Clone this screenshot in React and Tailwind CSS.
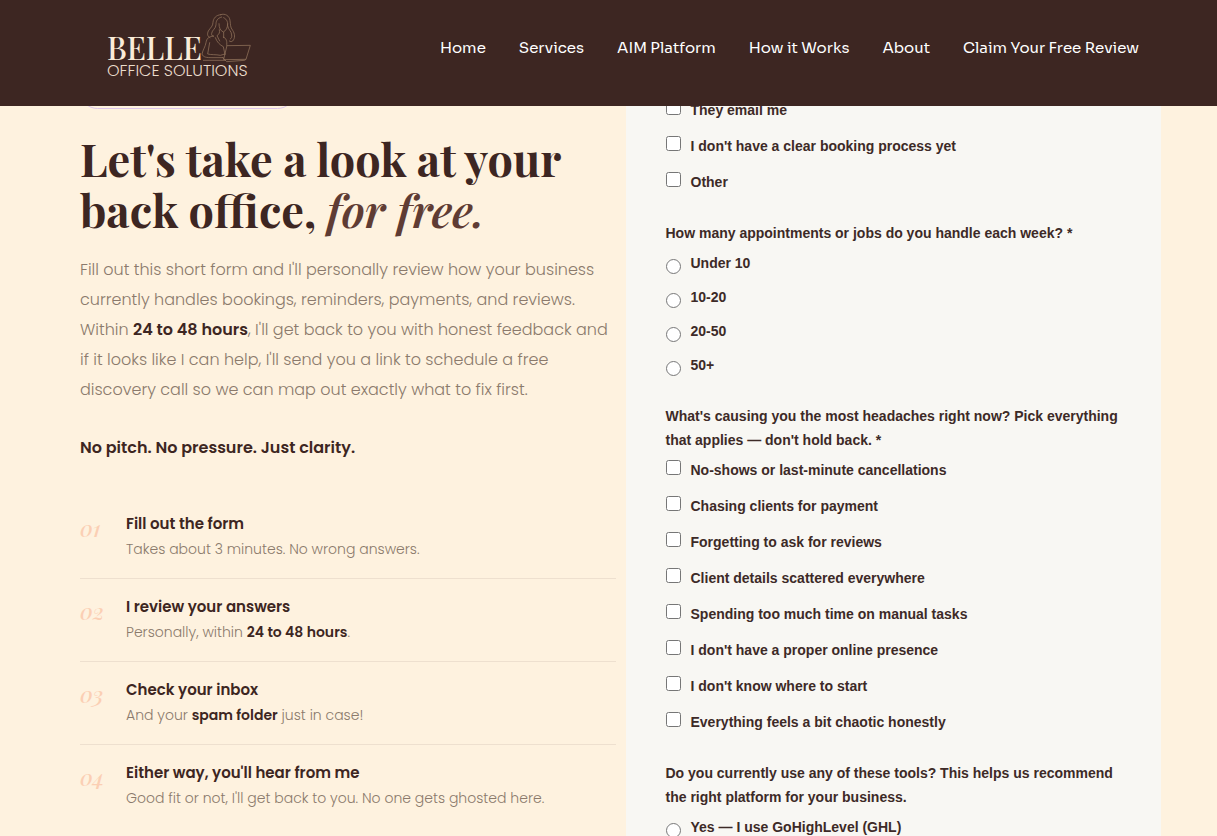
const navLinks = [
    "Home",
    "Services",
    "AIM Platform",
    "How it Works",
    "About",
    "Claim Your Free Review",
];

const steps = [
    { num: "01", title: "Fill out the form", text: "Takes about 3 minutes. No wrong answers." },
    {
        num: "02",
        title: "I review your answers",
        text: <>Personally, within <Strong>24 to 48 hours</Strong>.</>,
    },
    {
        num: "03",
        title: "Check your inbox",
        text: <>And your <Strong>spam folder</Strong> just in case!</>,
    },
    {
        num: "04",
        title: "Either way, you'll hear from me",
        text: "Good fit or not, I'll get back to you. No one gets ghosted here.",
    },
];

const questions = [
    {
        id: "booking",
        type: "checkbox",
        options: ["They email me", "I don't have a clear booking process yet", "Other"],
    },
    {
        id: "volume",
        type: "radio",
        label: "How many appointments or jobs do you handle each week? *",
        options: ["Under 10", "10-20", "20-50", "50+"],
    },
    {
        id: "headaches",
        type: "checkbox",
        label: "What's causing you the most headaches right now? Pick everything that applies — don't hold back. *",
        options: [
            "No-shows or last-minute cancellations",
            "Chasing clients for payment",
            "Forgetting to ask for reviews",
            "Client details scattered everywhere",
            "Spending too much time on manual tasks",
            "I don't have a proper online presence",
            "I don't know where to start",
            "Everything feels a bit chaotic honestly",
        ],
    },
    {
        id: "tools",
        type: "radio",
        label: "Do you currently use any of these tools? This helps us recommend the right platform for your business.",
        options: ["Yes — I use GoHighLevel (GHL)"],
    },
];

function Strong({ children }) {
    return <strong className="font-semibold text-[#3d2622]">{children}</strong>;
}

function Logo() {
    return (
        <a href="#home" aria-label="Belle Office Solutions">
            <svg width="150" height="70" viewBox="0 0 150 70" fill="none">
                <text x="4" y="48" fontSize="31" fill="#fbecd8" className="font-['Playfair_Display','Liberation_Serif',serif] font-medium">
                    BELLE
                </text>
                <text x="4" y="64" fontSize="16" fill="#eadccb" className="font-['Poppins','Lato',sans-serif] font-light">
                    OFFICE SOLUTIONS
                </text>
                <g transform="translate(87 -7) scale(0.3333)" stroke="#8d6f58" strokeWidth="2.4" strokeLinecap="round" strokeLinejoin="round">
                    {/* hair */}
                    <path d="M92 29C78 30 70 40 69 52c0 12-8 16-14 26-4 9-3 17 5 20" />
                    <path d="M92 29c14-5 26 4 28 17 2 13 0 20 8 30 7 11 8 23 0 32-3 3-7 2-10 0" />
                    <path d="M95 36c-15 4-17 14-17 23 0 12-12 16-13 26-1 6 2 9 6 9" />
                    <path d="M101 38c12 6 12 15 12 24 1 12 12 16 12 28 1 6-1 10-4 12" />
                    {/* face and neck */}
                    <path d="M87 56c0 13 4 21 13 25 8-4 13-12 13-25M88 74c2 9 0 13-7 18l8 16M101 82l0 16" />
                    {/* blouse and arms */}
                    <path d="M70 93c-14 2-20 7-22 20-2 12-9 21-12 34 3 10 14 11 30 11h34" />
                    <path d="M59 113l-6 34c12 3 24 1 38 4l14-4M76 98c5 14 14 22 24 27l5 24M100 96c9 3 12 14 10 25" />
                    {/* laptop */}
                    <path d="M112 122l69-1-13 42-66 1zM98 158l12 12 54-4 4-3" />
                    <path d="M40 166h66" />
                </g>
            </svg>
        </a>
    );
}

function Header() {
    return (
        <header className="relative z-10 flex shrink-0 items-start justify-between bg-[#3d2622] pt-3 pr-[78px] pb-6 pl-[103px]">
            <Logo />
            <nav className="flex gap-[33px] pt-6 font-['Sora','Inter',sans-serif] text-[15px] leading-6 font-medium whitespace-nowrap text-white">
                {navLinks.map((link) => (
                    <a key={link} href="#">{link}</a>
                ))}
            </nav>
        </header>
    );
}

function Intro() {
    return (
        <section className="font-['Poppins','Inter',sans-serif] text-[#8b7a6c]">
            <div className="-mt-8 h-[35px] w-[215px] rounded-full border border-[#dcc5ea]" />
            <h1 className="mt-6 font-['Playfair_Display','Liberation_Serif',serif] text-[45px] leading-[51px] font-bold whitespace-nowrap text-[#3d2622]">
                Let's take a look at your<br />
                back office, <em className="font-semibold text-[#5f3c34]">for free.</em>
            </h1>
            <p className="mt-5 text-base leading-[30px] font-light whitespace-nowrap">
                Fill out this short form and I'll personally review how your business<br />
                currently handles bookings, reminders, payments, and reviews.<br />
                Within <Strong>24 to 48 hours</Strong>, I'll get back to you with honest feedback and<br />
                if it looks like I can help, I'll send you a link to schedule a free<br />
                discovery call so we can map out exactly what to fix first.
            </p>
            <p className="mt-7 text-base leading-[30px]"><Strong>No pitch. No pressure. Just clarity.</Strong></p>
            <ol className="mt-[33px]">
                {steps.map((step) => (
                    <li key={step.num} className="flex gap-6 border-b border-[#eee0cf] pt-4 pb-4 last:border-b-0">
                        <span className="w-[22px] pt-1 font-['Playfair_Display','Liberation_Serif',serif] text-[22px] leading-6 font-medium text-[#fbcfb4] italic">
                            {step.num}
                        </span>
                        <div>
                            <h2 className="text-[15px] leading-6 font-semibold text-[#3d2622]">{step.title}</h2>
                            <p className="text-sm leading-[26px] font-light">{step.text}</p>
                        </div>
                    </li>
                ))}
            </ol>
        </section>
    );
}

function Question({ question }) {
    const isRadio = question.type === "radio";
    return (
        <div role="group" aria-labelledby={question.label ? question.id : undefined}>
            {question.label && <p id={question.id} className="mb-1.5">{question.label}</p>}
            <div className={isRadio ? "flex flex-col gap-2.5" : "flex flex-col gap-3"}>
                {question.options.map((option) => (
                    <label key={option} className="flex items-start gap-2.5">
                        <input
                            type={question.type}
                            name={question.id}
                            className={isRadio ? "mt-2 size-[15px] shrink-0" : "mt-0.5 size-[15px] shrink-0"}
                        />
                        {option}
                    </label>
                ))}
            </div>
        </div>
    );
}

function ReviewForm() {
    return (
        <form className="bg-[#f8f7f3] px-10 font-['Liberation_Sans',sans-serif] text-sm leading-6 font-bold text-[#3d2a27]">
            <div className="-mt-2 flex flex-col gap-[27px]">
                {questions.map((question) => (
                    <Question key={question.id} question={question} />
                ))}
            </div>
        </form>
    );
}

export default function App() {
    return (
        <div className="flex h-screen flex-col overflow-hidden bg-[#fef2df]">
            <Header />
            <main className="grid min-h-0 flex-1 grid-cols-2 gap-2.5 pr-14 pl-20">
                <Intro />
                <ReviewForm />
            </main>
        </div>
    );
}
